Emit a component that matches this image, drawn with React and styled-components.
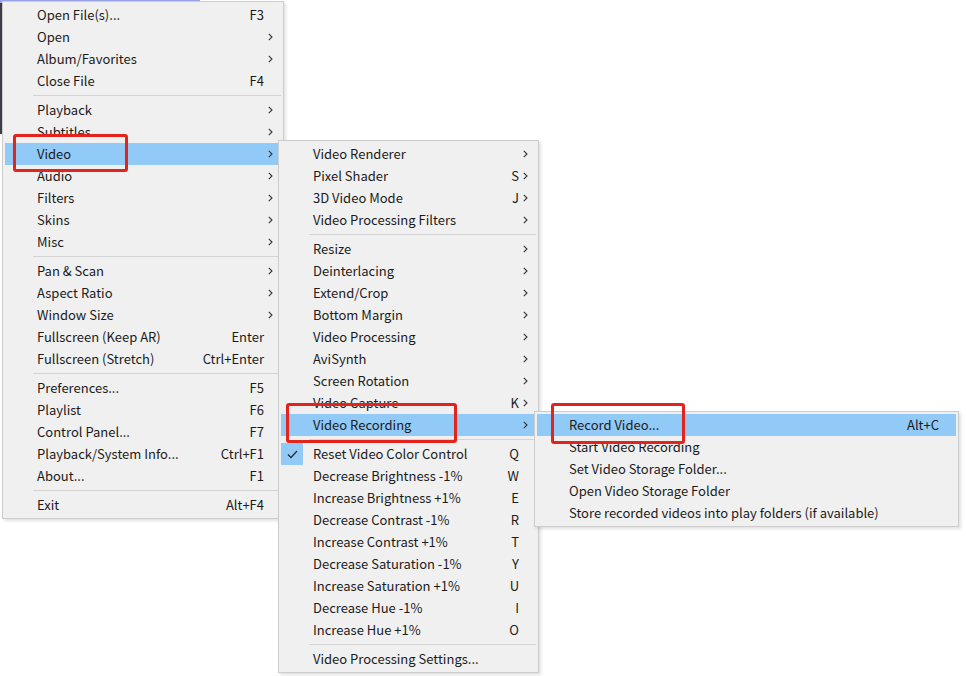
import React from 'react';
import styled, { createGlobalStyle } from 'styled-components';

const GlobalStyle = createGlobalStyle`
  html, body { margin: 0; padding: 0; background: #fff; }
  body { font-family: "Noto Sans CJK SC", "Noto Sans", sans-serif; }
`;

const mainMenu = [
  { label: 'Open File(s)...', key: 'F3' },
  { label: 'Open', sub: true },
  { label: 'Album/Favorites', sub: true },
  { label: 'Close File', key: 'F4' },
  'sep',
  { label: 'Playback', sub: true },
  { label: 'Subtitles', sub: true },
  { label: 'Video', sub: true, active: true },
  { label: 'Audio', sub: true },
  { label: 'Filters', sub: true },
  { label: 'Skins', sub: true },
  { label: 'Misc', sub: true },
  'sep',
  { label: 'Pan & Scan', sub: true },
  { label: 'Aspect Ratio', sub: true },
  { label: 'Window Size', sub: true },
  { label: 'Fullscreen (Keep AR)', key: 'Enter' },
  { label: 'Fullscreen (Stretch)', key: 'Ctrl+Enter' },
  'sep',
  { label: 'Preferences...', key: 'F5' },
  { label: 'Playlist', key: 'F6' },
  { label: 'Control Panel...', key: 'F7' },
  { label: 'Playback/System Info...', key: 'Ctrl+F1' },
  { label: 'About...', key: 'F1' },
  'sep',
  { label: 'Exit', key: 'Alt+F4' },
];

const videoMenu = [
  { label: 'Video Renderer', sub: true },
  { label: 'Pixel Shader', key: 'S', sub: true },
  { label: '3D Video Mode', key: 'J', sub: true },
  { label: 'Video Processing Filters', sub: true },
  'sep',
  { label: 'Resize', sub: true },
  { label: 'Deinterlacing', sub: true },
  { label: 'Extend/Crop', sub: true },
  { label: 'Bottom Margin', sub: true },
  { label: 'Video Processing', sub: true },
  { label: 'AviSynth', sub: true },
  { label: 'Screen Rotation', sub: true },
  { label: 'Video Capture', key: 'K', sub: true },
  { label: 'Video Recording', sub: true, active: true },
  'sep',
  { label: 'Reset Video Color Control', key: 'Q', checked: true },
  { label: 'Decrease Brightness -1%', key: 'W' },
  { label: 'Increase Brightness +1%', key: 'E' },
  { label: 'Decrease Contrast -1%', key: 'R' },
  { label: 'Increase Contrast +1%', key: 'T' },
  { label: 'Decrease Saturation -1%', key: 'Y' },
  { label: 'Increase Saturation +1%', key: 'U' },
  { label: 'Decrease Hue -1%', key: 'I' },
  { label: 'Increase Hue +1%', key: 'O' },
  'sep',
  { label: 'Video Processing Settings...' },
];

const recordMenu = [
  { label: 'Record Video...', key: 'Alt+C', active: true },
  { label: 'Start Video Recording' },
  { label: 'Set Video Storage Folder...' },
  { label: 'Open Video Storage Folder' },
  { label: 'Store recorded videos into play folders (if available)' },
];

const Stage = styled.div`
  position: relative;
  width: 966px;
  height: 676px;
  overflow: hidden;
  background: #fff;
`;

const VideoWindow = styled.div`
  position: absolute;
  left: 0;
  top: 0;
  width: 200px;
  height: 131px;
  background: #3c3d42;
  border-top: 3px solid #98a2e4;
`;

const Menu = styled.div`
  position: absolute;
  left: ${(p) => p.$x}px;
  top: ${(p) => p.$y}px;
  width: ${(p) => p.$w}px;
  box-sizing: border-box;
  display: flex;
  flex-direction: column;
  padding: 2px;
  background: #f0f0f0;
  border: 1px solid #cccccc;
  box-shadow: 2px 2px 3px rgba(0, 0, 0, 0.12);
`;

const Item = styled.div`
  display: grid;
  grid-template-columns: 32px 1fr auto 17px;
  align-items: center;
  height: 22px;
  font-size: 13px;
  color: #1b1b1b;
  white-space: nowrap;
  background: ${(p) => (p.$active ? '#91c9f7' : 'transparent')};
`;

const CheckCell = styled.span`
  display: flex;
  align-items: center;
  justify-content: center;
  width: 22px;
  height: 22px;
  background: ${(p) => (p.$on ? '#91c9f7' : 'transparent')};
`;

const Label = styled.span`
  line-height: 22px;
`;

const Shortcut = styled.span`
  line-height: 22px;
  text-align: right;
`;

const ArrowCell = styled.span`
  display: flex;
  align-items: center;
  padding-left: 4px;
`;

const Separator = styled.div`
  height: 7px;
  display: flex;
  align-items: center;
  padding-left: 28px;
  &::after {
    content: '';
    flex: 1;
    height: 1px;
    background: #d4d4d4;
  }
`;

const Highlight = styled.div`
  position: absolute;
  left: ${(p) => p.$x}px;
  top: ${(p) => p.$y}px;
  width: ${(p) => p.$w}px;
  height: ${(p) => p.$h}px;
  box-sizing: border-box;
  border: 3px solid #e5231d;
  border-radius: 3px;
`;

const Chevron = () => (
  <svg width="5" height="8" viewBox="0 0 5 8">
    <polyline points="0.8,0.8 4,4 0.8,7.2" fill="none" stroke="#333" strokeWidth="1.1" />
  </svg>
);

const Check = () => (
  <svg width="11" height="9" viewBox="0 0 11 9">
    <polyline points="1,4.5 4,7.5 10,1" fill="none" stroke="#2b2b2b" strokeWidth="1.3" />
  </svg>
);

function PopupMenu({ items, x, y, w }) {
  return (
    <Menu $x={x} $y={y} $w={w}>
      {items.map((it, i) =>
        it === 'sep' ? (
          <Separator key={i} />
        ) : (
          <Item key={i} $active={it.active}>
            <CheckCell $on={it.checked}>{it.checked && <Check />}</CheckCell>
            <Label>{it.label}</Label>
            <Shortcut>{it.key}</Shortcut>
            <ArrowCell>{it.sub && <Chevron />}</ArrowCell>
          </Item>
        )
      )}
    </Menu>
  );
}

export default function App() {
  return (
    <Stage>
      <GlobalStyle />
      <VideoWindow />
      <PopupMenu items={mainMenu} x={2} y={1} w={282} />
      <PopupMenu items={videoMenu} x={278} y={140} w={261} />
      <PopupMenu items={recordMenu} x={534} y={411} w={425} />
      <Highlight $x={13} $y={134} $w={115} $h={38} />
      <Highlight $x={286} $y={403} $w={171} $h={40} />
      <Highlight $x={551} $y={403} $w={134} $h={41} />
    </Stage>
  );
}
